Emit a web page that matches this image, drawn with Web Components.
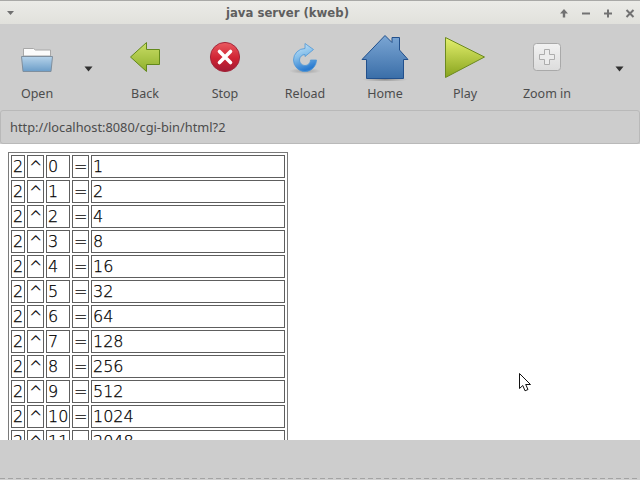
<!DOCTYPE html>
<html>
<head>
<meta charset="utf-8">
<title>java server (kweb)</title>
<style>
    html, body { margin: 0; padding: 0; width: 640px; height: 480px; overflow: hidden; }
    body { font-family: "Noto Sans", sans-serif; background: #cdcdcd; }
</style>
</head>
<body>
<kweb-window>
    <kweb-titlebar slot="title">java server (kweb)</kweb-titlebar>
    <kweb-toolbar slot="toolbar">
        <tool-button label="Open" style="width:74px">
            <svg slot="icon" width="48" height="48" viewBox="0 0 48 48">
                <defs>
                    <linearGradient id="fold" x1="0" y1="0" x2="0" y2="1"><stop offset="0" stop-color="#b6d3ea"/><stop offset="1" stop-color="#6b9dc8"/></linearGradient>
                </defs>
                <path d="M10.5 23V15.5h10l2 1.5h15v6z" fill="#fbfbfb" stroke="#a8a8a8"/>
                <path d="M8.5 23.5h31l-1.5 15H10z" fill="url(#fold)" stroke="#7f8f9e"/>
            </svg>
        </tool-button>
        <tool-arrow style="width:31px;padding-right:3px"></tool-arrow>
        <tool-button label="Back">
            <svg slot="icon" width="48" height="48" viewBox="0 0 48 48">
                <defs>
                    <linearGradient id="back" x1="0" y1="0" x2="0" y2="1"><stop offset="0" stop-color="#c9dd66"/><stop offset="1" stop-color="#8fb02c"/></linearGradient>
                </defs>
                <path d="M9.5 24L25.5 9.500V16.500H38.500V31.500H25.500V38.500z" fill="url(#back)" stroke="#63891b"/>
            </svg>
        </tool-button>
        <tool-button label="Stop">
            <svg slot="icon" width="48" height="48" viewBox="0 0 48 48">
                <defs>
                    <linearGradient id="stop" x1="0" y1="0" x2="0" y2="1"><stop offset="0" stop-color="#ea5a60"/><stop offset="0.55" stop-color="#cf2333"/><stop offset="1" stop-color="#a11a33"/></linearGradient>
                </defs>
                <circle cx="24" cy="24" r="14.600" fill="url(#stop)" stroke="#a3273a"/>
                <path d="M18.500 18.500L29.500 29.500M29.500 18.500L18.500 29.500" stroke="#fff" stroke-width="3.600" stroke-linecap="round"/>
            </svg>
        </tool-button>
        <tool-button label="Reload">
            <svg slot="icon" width="48" height="48" viewBox="0 0 48 48">
                <defs>
                    <linearGradient id="rel" x1="0" y1="0" x2="0.300" y2="1"><stop offset="0" stop-color="#cfe8f8"/><stop offset="0.5" stop-color="#86bfea"/><stop offset="1" stop-color="#2a7bd0"/></linearGradient>
                    <radialGradient id="shad"><stop offset="0" stop-color="#000" stop-opacity=".22"/><stop offset="1" stop-color="#000" stop-opacity="0"/></radialGradient>
                </defs>
                <ellipse cx="24" cy="38" rx="16" ry="3" fill="url(#shad)"/>
                <path d="M24 15.500A11.500 11.500 0 1 0 35.500 27H29.500A5.500 5.500 0 1 1 24 21.500V23.500L32.500 16.500L24 10.500z" fill="url(#rel)" stroke="#4f97d6" stroke-width=".8"/>
            </svg>
        </tool-button>
        <tool-button label="Home">
            <svg slot="icon" width="48" height="48" viewBox="0 0 48 48">
                <defs>
                    <linearGradient id="home" x1="0" y1="0" x2="0" y2="1"><stop offset="0" stop-color="#7ba6d4"/><stop offset="1" stop-color="#3a6ea8"/></linearGradient>
                    <radialGradient id="shad2"><stop offset="0" stop-color="#000" stop-opacity=".3"/><stop offset="1" stop-color="#000" stop-opacity="0"/></radialGradient>
                </defs>
                <ellipse cx="24" cy="46.500" rx="23" ry="2.500" fill="url(#shad2)"/>
                <path d="M24 2.500L31 9.500V4.500H38.500V17L47 26.500H42.500V45.500H5.500V26.500H1z" fill="url(#home)" stroke="#22508c" stroke-linejoin="round"/>
            </svg>
        </tool-button>
        <tool-button label="Play">
            <svg slot="icon" width="48" height="48" viewBox="0 0 48 48">
                <defs>
                    <linearGradient id="play" x1="0" y1="0" x2="0" y2="1"><stop offset="0" stop-color="#e4f06e"/><stop offset="1" stop-color="#87a31d"/></linearGradient>
                </defs>
                <path d="M4.500 4.500V44.500L43.500 24z" fill="url(#play)" stroke="#6c8a20" stroke-linejoin="round"/>
            </svg>
        </tool-button>
        <tool-button label="Zoom in" style="width:84px">
            <svg slot="icon" width="48" height="48" viewBox="0 0 48 48">
                <defs>
                    <linearGradient id="zoomin" x1="0" y1="0" x2="0" y2="1"><stop offset="0" stop-color="#f2f2f2"/><stop offset="1" stop-color="#dcdcdc"/></linearGradient>
                </defs>
                <rect x="10.500" y="10.500" width="27" height="27" rx="3" fill="url(#zoomin)" stroke="#a9a9a9"/>
                <path d="M21.500 16.500H26.500V21.500H31.500V26.500H26.500V31.500H21.500V26.500H16.500V21.500H21.500z" fill="#ececec" stroke="#adadad"/>
            </svg>
        </tool-button>
        <tool-arrow style="width:60px;padding-right:0"></tool-arrow>
    </kweb-toolbar>
    <location-bar slot="location">http://localhost:8080/cgi-bin/html?2</location-bar>
    <power-table slot="content" base="2" rows="12"></power-table>
    <mouse-pointer slot="content"></mouse-pointer>
</kweb-window>

<script>
// window frame: stacked bars, page area, status bar
class KwebWindow extends HTMLElement {
    constructor() {
        super();
        this.attachShadow({ mode: 'open' });
        this.shadowRoot.innerHTML = `
            <style>
                :host { display: flex; flex-direction: column; width: 640px; height: 480px; background: #cdcdcd; }
                .page { position: relative; height: 296px; overflow: hidden; background: #fff; }
                .status { flex: 1; display: flex; flex-direction: column; justify-content: flex-end; padding-bottom: 1px; }
                .dashes { height: 1px; background: repeating-linear-gradient(90deg, #a3a3a3 0 5px, transparent 5px 8px); }
            </style>
            <slot name="title"></slot>
            <slot name="toolbar"></slot>
            <slot name="location"></slot>
            <div class="page"><slot name="content"></slot></div>
            <div class="status"><div class="dashes"></div></div>
        `;
    }
}

class KwebTitlebar extends HTMLElement {
    constructor() {
        super();
        this.attachShadow({ mode: 'open' });
        this.shadowRoot.innerHTML = `
            <style>
                :host { display: flex; align-items: center; box-sizing: border-box; height: 24px; padding: 1px 0 0 6px;
                    border-top: 1px solid #a9a9a7; background: linear-gradient(#ebebe7, #e1e1dc); }
                .menu { width: 9px; height: 6px; }
                .text { flex: 1; text-align: center; padding-left: 4px; font: bold 11.700px "DejaVu Sans", sans-serif; color: #5f5f5f; }
                .btns { display: flex; gap: 6px; padding-right: 2px; }
                svg { display: block; }
            </style>
            <svg class="menu" viewBox="0 0 9 6"><path d="M1 1H8L4.500 5z" fill="#707070"/></svg>
            <div class="text"><slot></slot></div>
            <div class="btns">
                <svg width="16" height="16" viewBox="0 0 16 16"><path d="M8 4L12 8.500H9.200V12.500H6.800V8.500H4z" fill="#727272"/></svg>
                <svg width="16" height="16" viewBox="0 0 16 16"><path d="M4 7.500H12V9.500H4z" fill="#727272"/></svg>
                <svg width="16" height="16" viewBox="0 0 16 16"><path d="M7 4.500H9V7.500H12V9.500H9V12.500H7V9.500H4V7.500H7z" fill="#727272"/></svg>
                <svg width="16" height="16" viewBox="0 0 16 16"><path d="M4.500 5L11.500 12M11.500 5L4.500 12" stroke="#727272" stroke-width="2"/></svg>
            </div>
        `;
    }
}

class KwebToolbar extends HTMLElement {
    constructor() {
        super();
        this.attachShadow({ mode: 'open' });
        this.shadowRoot.innerHTML = `
            <style>
                :host { display: flex; height: 86px; box-sizing: border-box; padding-top: 9px; }
            </style>
            <slot></slot>
        `;
    }
}

class ToolButton extends HTMLElement {
    constructor() {
        super();
        this.attachShadow({ mode: 'open' });
        this.shadowRoot.innerHTML = `
            <style>
                :host { display: flex; flex-direction: column; align-items: center; flex: none; width: 80px; }
                .icon { height: 48px; }
                .label { margin-top: 4px; font: 12.500px/18px "Noto Sans", sans-serif; color: #4c4c4c; white-space: nowrap; }
            </style>
            <div class="icon"><slot name="icon"></slot></div>
            <div class="label"></div>
        `;
        this.shadowRoot.querySelector('.label').textContent = this.getAttribute('label');
    }
}

// the little drop down triangle
class ToolArrow extends HTMLElement {
    constructor() {
        super();
        this.attachShadow({ mode: 'open' });
        this.shadowRoot.innerHTML = `
            <style>
                :host { display: flex; flex: none; justify-content: center; padding-top: 33px; box-sizing: border-box; height: 48px; }
                svg { display: block; }
            </style>
            <svg width="9" height="6" viewBox="0 0 9 6"><path d="M0.500 0.500H8.500L4.500 5.500z" fill="#303030"/></svg>
        `;
    }
}

class LocationBar extends HTMLElement {
    constructor() {
        super();
        this.attachShadow({ mode: 'open' });
        this.shadowRoot.innerHTML = `
            <style>
                :host { display: flex; align-items: center; box-sizing: border-box; height: 34px; padding-left: 9px;
                    border: 1px solid #b9b9b9; border-radius: 3px; margin-right: 0;
                    font: 12.800px "Noto Sans", sans-serif; color: #4c4c4c; }
            </style>
            <slot></slot>
        `;
    }
}

class PowerTable extends HTMLElement {
    constructor() {
        super();
        this.attachShadow({ mode: 'open' });
    }

    connectedCallback() {
        const base = Number(this.getAttribute('base'));
        const rows = Number(this.getAttribute('rows'));
        let body = '';
        for (let i = 0; i < rows; i++) {
            body += `<tr><td>${base}</td><td>^</td><td>${i}</td><td>=</td><td>${Math.pow(base, i)}</td></tr>`;
        }
        this.shadowRoot.innerHTML = `
            <style>
                :host { display: block; padding: 8px; }
                table { border: 1px solid #7a7a7a; border-spacing: 2px; table-layout: fixed; width: 280px;
                    font: 200 16px "DejaVu Sans", sans-serif; color: #000; -webkit-text-stroke: 0.25px #000; }
                td { border: 1px solid #5e5e5e; padding: 0 1px; height: 23px; box-sizing: border-box; white-space: nowrap; }
            </style>
            <table>
                <colgroup><col style="width:14px"><col style="width:17px"><col style="width:24px"><col style="width:17px"><col></colgroup>
                <tbody>${body}</tbody>
            </table>
        `;
    }
}

// pointer lying over the page, so it sits on its own spot
class MousePointer extends HTMLElement {
    constructor() {
        super();
        this.attachShadow({ mode: 'open' });
        this.shadowRoot.innerHTML = `
            <style>
                :host { position: absolute; left: 519px; top: 229px; width: 14px; height: 20px; }
                svg { display: block; }
            </style>
            <svg width="14" height="20" viewBox="0 0 14 20">
                <path d="M0.500 0.500V15.500L3.800 12.500L6 17.800L9 16.500L6.700 11.500H11.500z" fill="#fff" stroke="#111" stroke-linejoin="round"/>
            </svg>
        `;
    }
}

customElements.define('kweb-window', KwebWindow);
customElements.define('kweb-titlebar', KwebTitlebar);
customElements.define('kweb-toolbar', KwebToolbar);
customElements.define('tool-button', ToolButton);
customElements.define('tool-arrow', ToolArrow);
customElements.define('location-bar', LocationBar);
customElements.define('power-table', PowerTable);
customElements.define('mouse-pointer', MousePointer);
</script>
</body>
</html>
